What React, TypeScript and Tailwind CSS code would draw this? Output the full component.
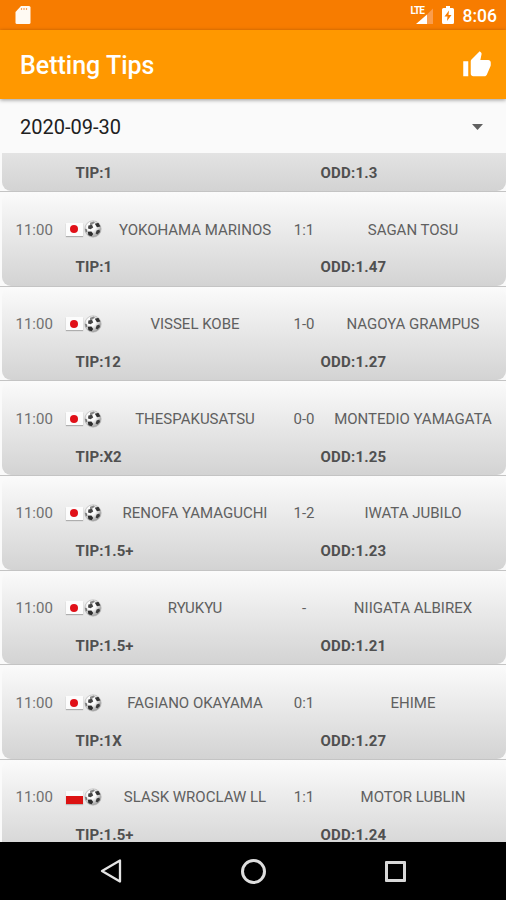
type Match = {
  time: string;
  flag: "jp" | "pl";
  home: string;
  score: string;
  away: string;
  tip: string;
  odd: string;
};

const matches: Match[] = [
  { time: "", flag: "jp", home: "", score: "", away: "", tip: "1", odd: "1.3" },
  { time: "11:00", flag: "jp", home: "YOKOHAMA MARINOS", score: "1:1", away: "SAGAN TOSU", tip: "1", odd: "1.47" },
  { time: "11:00", flag: "jp", home: "VISSEL KOBE", score: "1-0", away: "NAGOYA GRAMPUS", tip: "12", odd: "1.27" },
  { time: "11:00", flag: "jp", home: "THESPAKUSATSU", score: "0-0", away: "MONTEDIO YAMAGATA", tip: "X2", odd: "1.25" },
  { time: "11:00", flag: "jp", home: "RENOFA YAMAGUCHI", score: "1-2", away: "IWATA JUBILO", tip: "1.5+", odd: "1.23" },
  { time: "11:00", flag: "jp", home: "RYUKYU", score: "-", away: "NIIGATA ALBIREX", tip: "1.5+", odd: "1.21" },
  { time: "11:00", flag: "jp", home: "FAGIANO OKAYAMA", score: "0:1", away: "EHIME", tip: "1X", odd: "1.27" },
  { time: "11:00", flag: "pl", home: "SLASK WROCLAW LL", score: "1:1", away: "MOTOR LUBLIN", tip: "1.5+", odd: "1.24" },
];

function Flag({ country }: { country: "jp" | "pl" }) {
  if (country === "pl") {
    return (
      <span className="flex h-[13px] w-[17px] flex-col bg-[#fafafa] shadow-[0_1px_1px_rgba(0,0,0,0.2)]">
        <span className="mt-[5px] h-2 bg-[#dc1212]" />
      </span>
    );
  }
  return (
    <span className="flex h-[13px] w-[17px] items-center justify-center bg-[#fcfcfc] shadow-[0_1px_1px_rgba(0,0,0,0.25)]">
      <span className="mr-px size-2 rounded-full bg-[#e01018]" />
    </span>
  );
}

function Ball() {
  return (
    <svg className="ml-px size-[18px]" viewBox="0 0 18 18">
      <defs>
        <radialGradient id="ball" cx="0.4" cy="0.35" r="0.65">
          <stop offset="0.4" stopColor="#fafafa" />
          <stop offset="1" stopColor="#a0a0a0" />
        </radialGradient>
        <clipPath id="edge">
          <circle cx="9" cy="9" r="8.2" />
        </clipPath>
      </defs>
      <circle cx="9" cy="9" r="8.2" fill="url(#ball)" stroke="#a8a8a8" strokeWidth="0.5" />
      <g clipPath="url(#edge)">
        <path d="M6 2.800 9.500 1.400 11 2.600 8.500 4.600 6 5.200Z" fill="#888" />
        <path d="M10.800 3.800 14.600 2.800 16.400 6.400 13 7.200Z" fill="#333" />
        <path d="M4.400 5.600 8 4.800 9.200 7.600 6.600 9.200 4 8.400Z" fill="#444" />
        <path d="M1 8.800 2.600 9 3.400 11.600 1.600 12.600Z" fill="#777" />
        <path d="M12.600 10.400 15.400 9.600 16 12 13.400 14.600 11.600 13.600Z" fill="#3c3c3c" />
        <path d="M3.800 11.800 7.400 11.400 9.200 14 7.600 16.200 4.400 15.200Z" fill="#2c2c2c" />
      </g>
    </svg>
  );
}

function MatchRow({ match }: { match: Match }) {
  return (
    <li className="h-[94.67px] shrink-0 border-b-[1.5px] border-[#c4c4c4] bg-[#fafafa] pl-0.5">
      <div className="h-full rounded-[9px] bg-linear-to-b from-[#fbfbfb] to-[#d3d3d3]">
        <div className="flex h-[75.500px] items-center text-[15px] text-[#606060]">
          <span className="w-16 pl-[13.500px] text-[#707070]">{match.time}</span>
          <span className="mb-px flex w-[39px] items-center">
            <Flag country={match.flag} />
            <Ball />
          </span>
          <span className="w-[180px] text-center whitespace-nowrap">{match.home}</span>
          <span className="w-[38px] text-center">{match.score}</span>
          <span className="w-[180px] text-center whitespace-nowrap">{match.away}</span>
        </div>
        <div className="flex h-0 items-center text-[15px] font-bold text-[#505050]">
          <span className="w-[245px] pl-[73.500px] tracking-[0.1px]">TIP:{match.tip}</span>
          <span className="pl-[73.500px] tracking-[0.2px]">ODD:{match.odd}</span>
        </div>
      </div>
    </li>
  );
}

function StatusBar() {
  return (
    <div className="flex h-[30px] items-center bg-[#f77c00] pr-[9px] pl-[15px] text-white">
      <svg className="h-5 w-4" viewBox="0 0 16 20">
        <path d="M6 1h8q1.500 0 1.500 1.500v15q0 1.500-1.500 1.500H2Q.5 19 .5 17.500V7Z" fill="#fffaf3" />
        <path d="M6.500 3v2M9 3v2M11.500 3v2" stroke="#f9a45a" strokeWidth="1.200" />
      </svg>
      <div className="ml-auto flex items-center">
        <div className="flex w-[23px] items-start">
          <span className="h-5 w-[9px] text-[10px] leading-[12px] font-bold tracking-[-0.9px]">LTE</span>
          <svg className="-ml-1 h-5 w-[18px] shrink-0" viewBox="0 0 18 20">
            <path d="M17 3.500V19H11V9.500Z" fill="#fa9d4d" />
            <path d="M11 9.500V19H0Z" fill="#fff" />
          </svg>
        </div>
        <svg className="mr-[9px] ml-2 h-5 w-3" viewBox="0 0 12 20">
          <path d="M4 1h4v2h2.500Q12 3 12 4.500v13Q12 19 10.500 19h-9Q0 19 0 17.500v-13Q0 3 1.500 3H4Z" fill="#fff" />
          <path d="M7 5.500 2.500 11.500H5.500L5 16 9.500 10H6.500Z" fill="#f77c00" />
        </svg>
        <span className="pt-px text-[17.500px] leading-5 font-medium">8:06</span>
      </div>
    </div>
  );
}

export default function App() {
  return (
    <div className="flex h-[900px] w-[506px] flex-col overflow-hidden bg-[#fafafa] font-['Roboto',sans-serif]">
      <StatusBar />
      <header className="z-10 flex h-[69px] shrink-0 items-center justify-between bg-[#ff9800] pr-[14px] pl-5 text-white shadow-[0_1px_4px_rgba(0,0,0,0.4)]">
        <h1 className="mt-[3px] text-[25px] font-medium">Betting Tips</h1>
        <svg className="size-[30px]" viewBox="0 0 24 24" fill="#fff">
          <path d="M1 21h4V9H1v12zm22-11c0-1.100-.9-2-2-2h-6.310l.95-4.570.03-.32c0-.41-.17-.79-.44-1.060L14.170 1 7.590 7.590C7.220 7.950 7 8.450 7 9v10c0 1.100.9 2 2 2h9c.83 0 1.540-.5 1.840-1.220l3.020-7.050c.09-.23.14-.47.14-.73v-2z" />
        </svg>
      </header>
      <div className="flex h-[54px] shrink-0 items-center justify-between pr-[23px] pl-5 text-[20px] text-[#202020]">
        <span className="mt-0.5">2020-09-30</span>
        <svg className="mt-px h-1.5 w-[11px]" viewBox="0 0 11 6">
          <path d="M0 0h11L5.500 6Z" fill="#606060" />
        </svg>
      </div>
      <ul className="flex h-[689px] shrink-0 flex-col overflow-hidden">
        <li className="flex h-[39px] shrink-0 flex-col justify-end overflow-hidden">
          <ul className="flex flex-col">
            <MatchRow match={matches[0]} />
          </ul>
        </li>
        {matches.slice(1).map((match) => (
          <MatchRow key={match.home} match={match} />
        ))}
      </ul>
      <nav className="flex h-[58px] shrink-0 items-center bg-black">
        <svg className="ml-[100px] h-6 w-[22px]" viewBox="0 0 22 24">
          <path d="M20 1.500V22.500L2 12Z" fill="none" stroke="#e4e4e4" strokeWidth="2.300" strokeLinejoin="round" />
        </svg>
        <span className="ml-[119px] size-[25px] rounded-full border-[3px] border-[#dedede]" />
        <span className="ml-[119px] size-[21px] rounded-[1px] border-[3px] border-[#d8d8d8]" />
      </nav>
    </div>
  );
}
